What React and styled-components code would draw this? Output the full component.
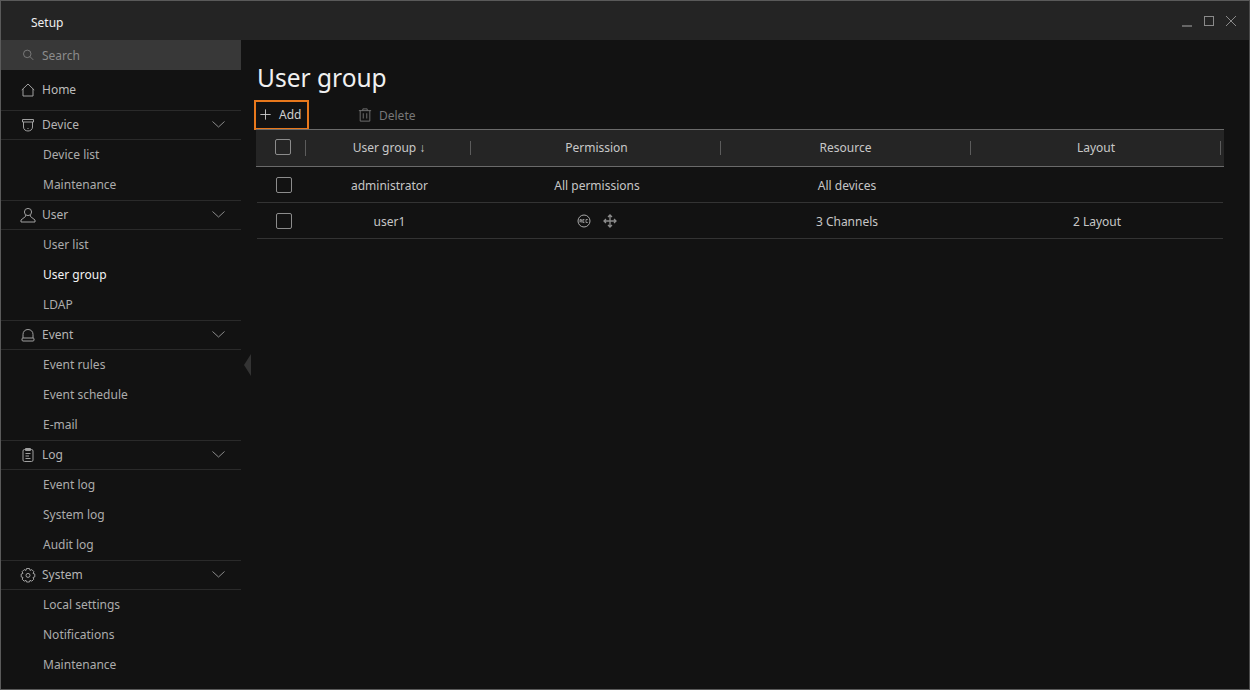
import React from 'react';
import styled, { createGlobalStyle } from 'styled-components';

const GlobalStyle = createGlobalStyle`
    html, body {
        margin: 0;
        padding: 0;
        background: #121212;
    }
    * {
        box-sizing: border-box;
    }
`;

const Frame = styled.div`
    width: 1250px;
    height: 690px;
    display: flex;
    flex-direction: column;
    overflow: hidden;
    position: relative;
    border: 1px solid #5a5a5a;
    border-right-color: #4a4a4a;
    background: #121212;
    font-family: 'Noto Sans', 'Open Sans', sans-serif;
    font-size: 12px;
    color: #c4c4c4;
`;

const TitleBar = styled.header`
    height: 39px;
    flex: none;
    display: flex;
    align-items: center;
    justify-content: space-between;
    padding: 4px 13px 0 30px;
    background: #242424;
    color: #efefef;
    font-size: 12px;
`;

const WindowButtons = styled.div`
    display: flex;
    align-items: center;
    margin-top: -4px;
    color: #8a8a8a;
`;

const Body = styled.div`
    flex: 1;
    display: flex;
    min-height: 0;
`;

const Sidebar = styled.nav`
    width: 240px;
    flex: none;
    display: flex;
    flex-direction: column;
`;

const SearchBox = styled.div`
    height: 30px;
    flex: none;
    display: flex;
    align-items: center;
    gap: 8px;
    padding-left: 21px;
    background: #383838;
    color: #8c8c8c;
`;

const HomeRow = styled.div`
    height: 40px;
    flex: none;
    display: flex;
    align-items: center;
    gap: 6px;
    padding: 0 0 1px 19px;
    color: #bdbdbd;

    svg {
        color: #a0a0a0;
    }
`;

const SectionRow = styled.div`
    height: 30px;
    flex: none;
    display: flex;
    align-items: center;
    gap: 6px;
    padding: 0 16px 1px 19px;
    border-top: 1px solid #2a2a2a;
    border-bottom: 1px solid #2a2a2a;
    color: #b4b4b4;

    svg {
        color: #a0a0a0;
    }
`;

const SectionLabel = styled.span`
    flex: 1;
`;

const NavItem = styled.div`
    height: 30px;
    flex: none;
    display: flex;
    align-items: center;
    padding: 0 0 2px 42px;
    color: ${props => (props.$active ? '#f4f4f4' : '#acacac')};
`;

const Group = styled.div`
    display: flex;
    flex-direction: column;
`;

const CollapseHandle = styled.div`
    position: absolute;
    left: 243px;
    top: 353px;
    width: 0;
    height: 0;
    border-top: 11px solid transparent;
    border-bottom: 11px solid transparent;
    border-right: 7px solid #333333;
`;

const Main = styled.main`
    flex: 1;
    min-width: 0;
    display: flex;
    flex-direction: column;
    padding: 20px 0 0 14px;
`;

const Title = styled.h1`
    margin: 0 0 0 2px;
    height: 40px;
    font-size: 24.5px;
    font-weight: 400;
    line-height: 35px;
    color: #f0f0f0;
`;

const Toolbar = styled.div`
    height: 30px;
    margin-left: -1px;
    display: flex;
    align-items: center;
`;

const AddButton = styled.div`
    width: 55px;
    height: 30px;
    display: flex;
    align-items: center;
    gap: 8px;
    padding: 0 0 2px 4px;
    border: 2px solid #e8781c;
    color: #cfcfcf;
`;

const DeleteButton = styled.div`
    display: flex;
    align-items: center;
    gap: 7px;
    margin-left: 49px;
    color: #777777;
`;

const Table = styled.div`
    width: 968px;
    margin: -1px 0 0 1px;
`;

const HeaderRow = styled.div`
    height: 38px;
    display: grid;
    grid-template-columns: 50px 165px 250px 250px 250px 3px;
    align-items: center;
    background: #252525;
    border-top: 1px solid #6a6a6a;
    border-bottom: 1px solid #6a6a6a;
`;

const HeaderCell = styled.div`
    height: 14px;
    display: flex;
    align-items: center;
    justify-content: center;
    padding-left: ${props => props.$shift || 0}px;
    border-right: 1px solid #5c5c5c;
    color: #c8c8c8;

    span {
        margin-top: -2px;
    }
`;

const CheckCell = styled(HeaderCell)`
    justify-content: flex-start;
    padding-left: 19px;
    height: 16px;
    overflow: visible;
`;

const DataRow = styled.div`
    height: 36px;
    width: 966px;
    margin-left: 1px;
    display: grid;
    grid-template-columns: 49px 165px 250px 250px 250px;
    align-items: center;
    border-bottom: 1px solid #333333;
`;

const Cell = styled.div`
    display: flex;
    align-items: center;
    justify-content: center;
    gap: 12px;
    padding-left: ${props => props.$shift || 0}px;
    padding-top: ${props => props.$down || 0}px;
    color: #c6c6c6;
`;

const Box = styled.span`
    display: block;
    width: 16px;
    height: 16px;
    flex: none;
    border: 1px solid #8c8c8c;
    border-radius: 2px;
`;

const RowBox = styled(Box)`
    margin-left: 19px;
`;

const Glyph = ({ size = 16, children, sw = 1 }) => (
    <svg width={size} height={size} viewBox="0 0 16 16" fill="none" stroke="currentColor" strokeWidth={sw} style={{ flex: 'none' }}>
        {children}
    </svg>
);

const SearchIcon = () => (
    <Glyph size={12}>
        <circle cx="7" cy="6.5" r="5" />
        <path d="M10.8 10.3 L15 14.5" />
    </Glyph>
);
const HomeIcon = () => (
    <Glyph>
        <path d="M1.8 8 L8 2 L14.2 8 M3 7 V14 H13 V7" />
    </Glyph>
);
const DeviceIcon = () => (
    <Glyph>
        <path d="M2.5 2.5 H13.5 V5 H2.5 Z M3.5 5 V10 C3.5 12.5 5.5 14 8 14 C10.5 14 12.5 12.5 12.5 10 V5" />
        <path d="M7.5 11.5 H8.5" />
    </Glyph>
);
const UserIcon = () => (
    <Glyph>
        <circle cx="8" cy="5" r="3.6" />
        <path d="M5.8 8 L5.5 9.5 L1 13 V15 H15 V13 L10.5 9.5 L10.2 8" />
    </Glyph>
);
const BellIcon = () => (
    <Glyph>
        <path d="M3 11 V7.5 C3 4.5 5 2.5 8 2.5 C11 2.5 13 4.5 13 7.5 V11" />
        <rect x="2" y="11" width="12" height="3" rx="1" />
    </Glyph>
);
const LogIcon = () => (
    <Glyph>
        <rect x="3" y="2.5" width="10" height="12" rx="1.5" />
        <path d="M5.5 1.5 H10.5 V3.5 H5.5 Z" />
        <path d="M5.5 6.5 H10.5 M5.5 9 H9 M5.5 11.5 H10.5" />
    </Glyph>
);
const GearIcon = () => (
    <Glyph>
        <path d="M6.5 1.5 H9.5 L10 3.4 L11.8 2.6 L13.9 4.7 L13 6.4 L14.8 7 V9.9 L13 10.5 L13.8 12.2 L11.8 14.2 L10 13.3 L9.5 15 H6.5 L6 13.3 L4.2 14.2 L2.2 12.2 L3 10.5 L1.2 9.9 V7 L3 6.4 L2.1 4.7 L4.2 2.6 L6 3.4 Z" />
        <circle cx="8" cy="8.4" r="2" />
    </Glyph>
);
const ChevronIcon = () => (
    <svg width="13" height="7" viewBox="0 0 13 7" fill="none" stroke="#8a8a8a" strokeWidth="1" style={{ flex: 'none' }}>
        <path d="M0.5 0.5 L6.5 6 L12.5 0.5" />
    </svg>
);
const PlusIcon = () => (
    <Glyph size={11} sw={1.3}>
        <path d="M8 0.5 V15.5 M0.5 8 H15.5" />
    </Glyph>
);
const TrashIcon = () => (
    <Glyph size={14}>
        <path d="M1 3 H15 M5.5 3 V1 H10.5 V3 M2.5 3 V15 H13.5 V3 M6 6 V12 M10 6 V12" />
    </Glyph>
);
const RecIcon = () => (
    <svg width="14" height="14" viewBox="0 0 14 14" fill="none" style={{ flex: 'none' }}>
        <circle cx="7" cy="7" r="6" stroke="#a8a8a8" />
        <path d="M3 5.5 V8.5 M3 5.5 H4.4 V7 H3 M4 7 L4.6 8.5 M5.8 5.5 V8.5 M5.8 5.5 H7.4 M5.8 7 H7.2 M5.8 8.5 H7.4 M10.8 5.5 H9 V8.5 H10.8" stroke="#a8a8a8" strokeWidth="0.8" />
    </svg>
);
const MoveIcon = () => (
    <svg width="14" height="14" viewBox="0 0 14 14" fill="none" stroke="#8c8c8c" strokeWidth="1.3" style={{ flex: 'none' }}>
        <path d="M7 1 V13 M1 7 H13 M5 3 L7 1 L9 3 M5 11 L7 13 L9 11 M3 5 L1 7 L3 9 M11 5 L13 7 L11 9" />
    </svg>
);

const sections = [
    { label: 'Device', icon: <DeviceIcon />, items: ['Device list', 'Maintenance'] },
    { label: 'User', icon: <UserIcon />, items: ['User list', 'User group', 'LDAP'] },
    { label: 'Event', icon: <BellIcon />, items: ['Event rules', 'Event schedule', 'E-mail'] },
    { label: 'Log', icon: <LogIcon />, items: ['Event log', 'System log', 'Audit log'] },
    { label: 'System', icon: <GearIcon />, items: ['Local settings', 'Notifications', 'Maintenance'] },
];

const App = () => {
    return (
        <Frame>
            <GlobalStyle />
            <TitleBar>
                <span>Setup</span>
                <WindowButtons>
                    <svg width="54" height="14" viewBox="0 0 54 14" fill="none" stroke="currentColor">
                        <path d="M0 12 H10" strokeWidth="2" stroke="#666666" />
                        <rect x="22.5" y="2.5" width="9" height="9" />
                        <path d="M44 2 L54 12 M54 2 L44 12" />
                    </svg>
                </WindowButtons>
            </TitleBar>
            <Body>
                <Sidebar>
                    <SearchBox>
                        <SearchIcon />
                        <span>Search</span>
                    </SearchBox>
                    <HomeRow>
                        <HomeIcon />
                        <span>Home</span>
                    </HomeRow>
                    {sections.map(section => (
                        <Group key={section.label}>
                            <SectionRow>
                                {section.icon}
                                <SectionLabel>{section.label}</SectionLabel>
                                <ChevronIcon />
                            </SectionRow>
                            {section.items.map(item => (
                                <NavItem key={item} $active={item === 'User group'}>{item}</NavItem>
                            ))}
                        </Group>
                    ))}
                </Sidebar>
                <CollapseHandle />
                <Main>
                    <Title>User group</Title>
                    <Toolbar>
                        <AddButton>
                            <PlusIcon />
                            <span>Add</span>
                        </AddButton>
                        <DeleteButton>
                            <TrashIcon />
                            <span>Delete</span>
                        </DeleteButton>
                    </Toolbar>
                    <Table>
                        <HeaderRow>
                            <CheckCell><Box /></CheckCell>
                            <HeaderCell $shift={2}><span>User group ↓</span></HeaderCell>
                            <HeaderCell $shift={2}><span>Permission</span></HeaderCell>
                            <HeaderCell><span>Resource</span></HeaderCell>
                            <HeaderCell $shift={1}><span>Layout</span></HeaderCell>
                        </HeaderRow>
                        <DataRow>
                            <RowBox />
                            <Cell $shift={2} $down={1}>administrator</Cell>
                            <Cell $shift={2} $down={1}>All permissions</Cell>
                            <Cell $shift={2} $down={1}>All devices</Cell>
                            <Cell />
                        </DataRow>
                        <DataRow>
                            <RowBox />
                            <Cell $shift={2} $down={1}>user1</Cell>
                            <Cell $shift={2}><RecIcon /><MoveIcon /></Cell>
                            <Cell $shift={2} $down={1}>3 Channels</Cell>
                            <Cell $shift={2} $down={1}>2 Layout</Cell>
                        </DataRow>
                    </Table>
                </Main>
            </Body>
        </Frame>
    );
};

export default App;
